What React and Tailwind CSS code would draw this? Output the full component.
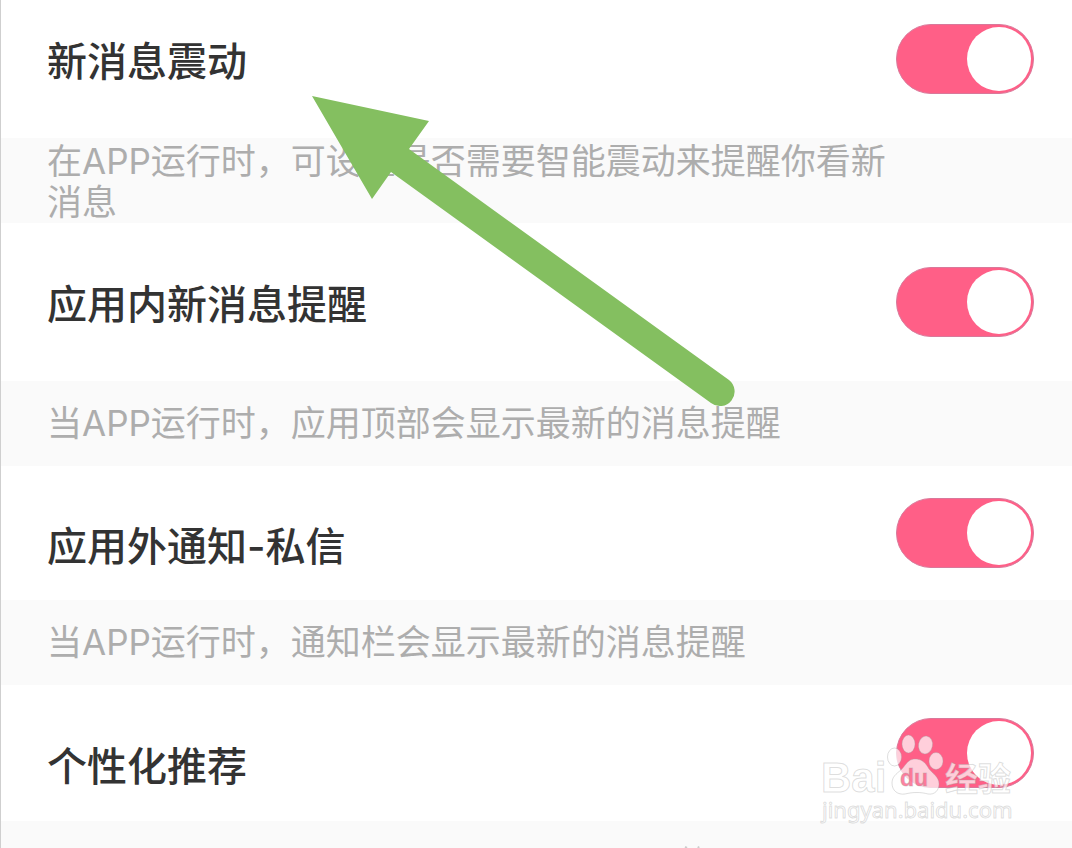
import { useState } from "react";

const font = "font-[family-name:Inter,'Noto_Sans_CJK_SC',sans-serif]";

const settings = [
  {
    id: "vibrate",
    title: "新消息震动",
    note: "在APP运行时，可设置是否需要智能震动来提醒你看新消息",
    row: "pt-6 pb-11",
    label: "pt-[3px]",
    band: "pt-[3px]",
  },
  {
    id: "in-app",
    title: "应用内新消息提醒",
    note: "当APP运行时，应用顶部会显示最新的消息提醒",
    row: "py-11",
    label: "pt-[3px]",
    band: "py-[22px]",
  },
  {
    id: "out-app",
    title: "应用外通知-私信",
    note: "当APP运行时，通知栏会显示最新的消息提醒",
    row: "py-8",
    label: "pt-[14px]",
    band: "py-[22px]",
  },
  {
    id: "personal",
    title: "个性化推荐",
    note: null,
    row: "py-[33px]",
    label: "pt-[14px]",
    band: "",
  },
];

function Toggle({ id }) {
  const [on, setOn] = useState(true);
  return (
    <input
      id={id}
      type="checkbox"
      role="switch"
      checked={on}
      onChange={(e) => setOn(e.target.checked)}
      className="h-[70px] w-[138px] shrink-0 cursor-pointer appearance-none rounded-full border border-[#d9789a] bg-[#d9d9d9] p-[2px] before:block before:size-16 before:rounded-full before:bg-white before:content-[''] checked:bg-[#ff5f87] checked:before:ml-auto"
    />
  );
}

function Setting({ item }) {
  return (
    <section>
      <div className={`flex items-start justify-between pr-[38px] pl-[46px] ${item.row}`}>
        <label
          htmlFor={item.id}
          className={`-mb-7 text-[40px] leading-[70px] font-medium text-[#333333] ${item.label}`}
        >
          {item.title}
        </label>
        <Toggle id={item.id} />
      </div>
      {item.note && (
        <p className={`bg-[#fafafa] pr-[180px] pl-[46px] text-[35px] leading-[41px] text-[#adadad] ${item.band}`}>
          {item.note}
        </p>
      )}
    </section>
  );
}

function Arrow() {
  return (
    <svg
      aria-hidden="true"
      className="pointer-events-none absolute top-[90px] left-[304px]"
      width="440"
      height="325"
      viewBox="305 90 440 325"
    >
      <path d="M312 96L429 121L409 149L729 380A14.5 14.5 0 0 1 711 403L391 172L372 199Z" fill="#84bf60" />
    </svg>
  );
}

function Watermark() {
  return (
    <svg
      className="pointer-events-none absolute right-[52px] bottom-[18px]"
      width="204"
      height="100"
      viewBox="816 730 204 100"
      fill="#ffffff"
      fillOpacity="0.7"
      stroke="#a0a0a0"
      strokeOpacity="0.35"
      strokeWidth="1"
    >
      <text x="821" y="792" fontSize="42" fontWeight="700" fontFamily="Liberation Sans, sans-serif">
        Bai
      </text>
      <ellipse cx="894.5" cy="757" rx="7" ry="9" />
      <ellipse cx="908.5" cy="744" rx="6.5" ry="9" />
      <ellipse cx="925.5" cy="745" rx="7" ry="9" transform="rotate(10 925.5 745)" />
      <ellipse cx="936" cy="761" rx="7" ry="8.5" />
      <path d="M915 759C908 759 906 765 901 770C896 774 892 777 892 783C892 791 898 795 905 794C913 792 921 792 928 794C935 795 939 790 939 784C939 777 933 774 929 769C926 764 923 759 915 759Z" />
      <text
        x="900"
        y="786"
        fontSize="23"
        fontWeight="700"
        fontFamily="Liberation Sans, sans-serif"
        fill="#ff5f87"
        fillOpacity="0.8"
      >
        du
      </text>
      <text x="945" y="791" fontSize="33" fontWeight="700" fontFamily="Noto Sans CJK SC, sans-serif">
        经验
      </text>
      <text x="822" y="818" fontSize="22" fontWeight="400" fontFamily="Noto Sans, sans-serif">
        jingyan.baidu.com
      </text>
    </svg>
  );
}

export default function App() {
  return (
    <main
      lang="zh-CN"
      className={`relative flex min-h-screen flex-col overflow-hidden border-l border-[#cfcfcf] bg-white ${font}`}
    >
      {settings.map((item) => (
        <Setting key={item.id} item={item} />
      ))}
      <div className="flex flex-1 items-end bg-[#fafafa] pl-[682px]">
        <svg aria-hidden="true" width="20" height="3" viewBox="0 0 20 3" className="block">
          <path d="M2 2L4 3M16 1.5L15 3" stroke="#cccccc" strokeWidth="2" />
        </svg>
      </div>
      <Arrow />
      <Watermark />
    </main>
  );
}
